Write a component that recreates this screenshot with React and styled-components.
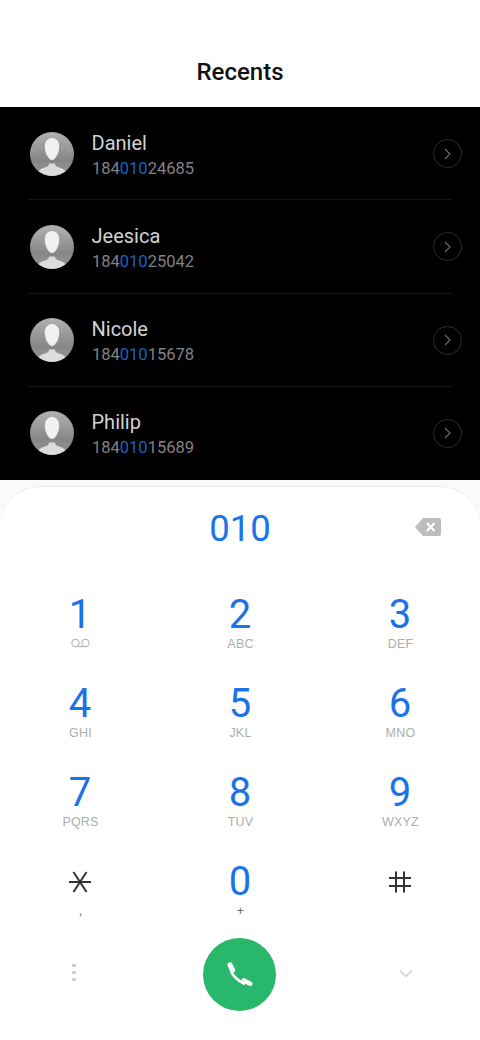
import styled, { createGlobalStyle } from "styled-components";

const GlobalStyle = createGlobalStyle`
    html, body {
        margin: 0;
        padding: 0;
        background: #fff;
        font-family: Roboto, "Liberation Sans", sans-serif;
    }
`;

const Page = styled.div`
    width: 480px;
    height: 1040px;
    display: flex;
    flex-direction: column;
    overflow: hidden;
    background: #fafafa;
`;
const Header = styled.header`
    height: 107px;
    box-sizing: border-box;
    padding-top: 57px;
    background: #fff;
    text-align: center;
    font-size: 24px;
    line-height: 30px;
    font-weight: 500;
    color: #111;
`;
const List = styled.ul`
    height: 373px;
    margin: 0;
    padding: 0;
    list-style: none;
    display: grid;
    grid-template-rows: repeat(4, 1fr);
    background: #000;
`;
const Row = styled.li`
    margin: 0 28px;
    padding-top: 1px;
    display: flex;
    align-items: center;
    border-bottom: 1px solid ${({ $last }) => ($last ? "transparent" : "#141414")};
`;
const Avatar = styled.svg`
    width: 44px;
    height: 44px;
    margin-left: 2px;
    flex-shrink: 0;
`;
const Info = styled.div`
    flex: 1;
    margin-left: 18px;
    padding-top: 3px;
`;
const Name = styled.div`
    font-size: 20px;
    line-height: 26px;
    margin-left: -0.5px;
    color: #d2d2d2;
`;
const Phone = styled.div`
    font-size: 16.5px;
    line-height: 25px;
    color: #828282;
`;
const Match = styled.span`
    color: #1a62c4;
`;
const Arrow = styled.div`
    width: 29px;
    height: 29px;
    margin-right: -10px;
    box-sizing: border-box;
    border: 1px solid #2f2f2f;
    border-radius: 50%;
    display: flex;
    align-items: center;
    justify-content: center;
`;
const Sheet = styled.section`
    flex: 1;
    margin-top: 6px;
    background: #fff;
    border-top: 1px solid #ebebeb;
    border-radius: 40px 40px 0 0;
`;
const Display = styled.div`
    height: 85px;
    display: grid;
    grid-template-columns: 1fr auto 1fr;
    align-items: center;
`;
const Typed = styled.div`
    font-size: 36.5px;
    line-height: 44px;
    margin-top: -2px;
    color: #1a73e8;
`;
const Delete = styled.svg`
    width: 26px;
    height: 18px;
    justify-self: end;
    margin: -6px 39px 0 0;
`;
const Keypad = styled.div`
    margin-top: 21px;
    display: grid;
    grid-template-columns: repeat(3, 160px);
    grid-template-rows: repeat(3, 89px) 78px;
`;
const Key = styled.div`
    display: flex;
    flex-direction: column;
    align-items: center;
`;
const Digit = styled.div`
    height: 44px;
    font-size: 40px;
    line-height: 44px;
    color: #1a73e8;
    display: flex;
    align-items: center;
`;
const Letters = styled.div`
    height: 13px;
    margin-left: 1px;
    font-family: "Liberation Sans", Arial, sans-serif;
    font-size: 12.5px;
    line-height: 14px;
    letter-spacing: 0.2px;
    color: ${({ $dark }) => ($dark ? "#666" : "#adadad")};
`;
const Footer = styled.div`
    display: grid;
    grid-template-columns: 1fr auto 1fr;
    align-items: center;
`;
const Dots = styled.div`
    display: flex;
    flex-direction: column;
    gap: 3.5px;
    margin: -4px 0 0 72px;
`;
const Dot = styled.span`
    width: 3.5px;
    height: 3.5px;
    border-radius: 50%;
    background: #c4c4c4;
`;
const CallButton = styled.button`
    width: 73px;
    height: 73px;
    padding: 0;
    margin-left: -1px;
    border: none;
    border-radius: 50%;
    background: #28b76b;
    display: flex;
    align-items: center;
    justify-content: center;
`;
const Collapse = styled.svg`
    width: 14px;
    height: 9px;
    justify-self: end;
    margin: -3px 67px 0 0;
`;

const contacts = [
    { name: "Daniel", before: "184", after: "24685" },
    { name: "Jeesica", before: "184", after: "25042" },
    { name: "Nicole", before: "184", after: "15678" },
    { name: "Philip", before: "184", after: "15689" },
];

const keys = [
    { digit: "1", voicemail: true },
    { digit: "2", letters: "ABC" },
    { digit: "3", letters: "DEF" },
    { digit: "4", letters: "GHI" },
    { digit: "5", letters: "JKL" },
    { digit: "6", letters: "MNO" },
    { digit: "7", letters: "PQRS" },
    { digit: "8", letters: "TUV" },
    { digit: "9", letters: "WXYZ" },
    { star: true, letters: ",", dark: true },
    { digit: "0", letters: "+", dark: true },
    { hash: true },
];

const AvatarIcon = ({ id }) => (
    <Avatar viewBox="0 0 44 44">
        <defs>
            <linearGradient id={id} x1="0" y1="0" x2="0" y2="1">
                <stop offset="0" stopColor="#b2b2b2" />
                <stop offset="0.65" stopColor="#868686" />
                <stop offset="1" stopColor="#9a9a9a" />
            </linearGradient>
            <clipPath id={`${id}-clip`}>
                <circle cx="22" cy="22" r="22" />
            </clipPath>
        </defs>
        <circle cx="22" cy="22" r="22" fill={`url(#${id})`} />
        <g clipPath={`url(#${id}-clip)`}>
            <path d="M7 44c0-5 3-7 8-8.500 3-.9 4-2 4-4h6c0 2 1 3.100 4 4 5 1.500 8 3.500 8 8.500z" fill="#dcdcdc" />
            <path d="M22 6c4.500 0 7.200 3.600 7.200 8.500 0 6-3.500 13.500-7.200 13.500s-7.200-7.500-7.200-13.500C14.800 9.600 17.500 6 22 6z" fill="#f1f1f1" />
        </g>
    </Avatar>
);

const ChevronRight = () => (
    <svg width="9" height="12" viewBox="0 0 9 12" fill="none" stroke="#6e6e6e" strokeWidth="1.1">
        <path d="M2 1l5 5-5 5" />
    </svg>
);

const Voicemail = () => (
    <svg width="19" height="14" viewBox="0 0 19 14" fill="none" stroke="#b5b5b5" strokeWidth="1.1">
        <circle cx="4.500" cy="6" r="3.600" />
        <circle cx="14.500" cy="6" r="3.600" />
        <path d="M4.500 9.600h10" />
    </svg>
);

const Star = () => (
    <svg width="24" height="24" viewBox="0 0 24 24" fill="none" stroke="#333" strokeWidth="2">
        <path d="M1 12h22M5.500 2l13 20M18.500 2l-13 20" />
    </svg>
);

const Hash = () => (
    <svg width="24" height="24" viewBox="0 0 24 24" fill="none" stroke="#333" strokeWidth="2">
        <path d="M1 8h22M1 16h22M8 1.500v21M16 1.500v21" />
    </svg>
);

const Handset = () => (
    <svg width="30" height="30" viewBox="0 0 30 30" fill="none" stroke="#fff" strokeLinecap="round">
        <path d="M5.500 9Q7.500 18 19 23.500" strokeWidth="2.800" />
        <path d="M5 4.800l2.600 5.200" strokeWidth="5" />
        <path d="M19 20.500l6.200 3.200" strokeWidth="4.600" />
    </svg>
);

const App = () => (
    <Page>
        <GlobalStyle />
        <Header>Recents</Header>
        <List>
            {contacts.map((contact, index) => (
                <Row key={contact.name} $last={index === contacts.length - 1}>
                    <AvatarIcon id={`avatar-${index}`} />
                    <Info>
                        <Name>{contact.name}</Name>
                        <Phone>
                            {contact.before}
                            <Match>010</Match>
                            {contact.after}
                        </Phone>
                    </Info>
                    <Arrow>
                        <ChevronRight />
                    </Arrow>
                </Row>
            ))}
        </List>
        <Sheet>
            <Display>
                <span />
                <Typed>010</Typed>
                <Delete viewBox="0 0 26 18">
                    <path d="M8 0h16a2 2 0 0 1 2 2v14a2 2 0 0 1-2 2H8L0 9z" fill="#bdbdbd" />
                    <path d="M12 5l7.500 8M19.500 5L12 13" stroke="#fff" strokeWidth="2.200" />
                </Delete>
            </Display>
            <Keypad>
                {keys.map((key, index) => (
                    <Key key={index}>
                        <Digit>
                            {key.digit}
                            {key.star && <Star />}
                            {key.hash && <Hash />}
                        </Digit>
                        {key.voicemail ? (
                            <Voicemail />
                        ) : (
                            <Letters $dark={key.dark}>{key.letters}</Letters>
                        )}
                    </Key>
                ))}
            </Keypad>
            <Footer>
                <Dots>
                    <Dot />
                    <Dot />
                    <Dot />
                </Dots>
                <CallButton>
                    <Handset />
                </CallButton>
                <Collapse viewBox="0 0 14 9" fill="none" stroke="#cfcfcf" strokeWidth="1.500">
                    <path d="M1 1.500l6 6 6-6" />
                </Collapse>
            </Footer>
        </Sheet>
    </Page>
);

export default App;
